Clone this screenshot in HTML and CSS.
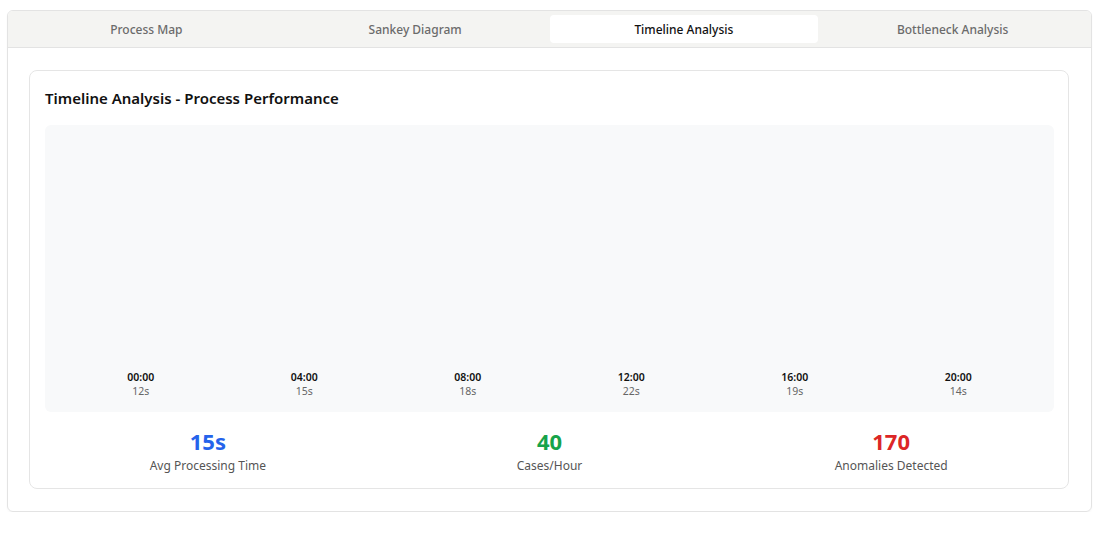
FILE: index.html
```html
<!DOCTYPE html>
<html>
<head>
<meta charset="utf-8">
<link rel="stylesheet" href="styles.css">
</head>
<body>
<div class="panel">
  <div class="tabs">
    <div class="tab">Process Map</div>
    <div class="tab">Sankey Diagram</div>
    <div class="tab active">Timeline Analysis</div>
    <div class="tab">Bottleneck Analysis</div>
  </div>
  <div class="content">
    <div class="card">
      <h3 class="title">Timeline Analysis - Process Performance</h3>
      <div class="chart">
        <div class="col"><div class="time">00:00</div><div class="val">12s</div></div>
        <div class="col"><div class="time">04:00</div><div class="val">15s</div></div>
        <div class="col"><div class="time">08:00</div><div class="val">18s</div></div>
        <div class="col"><div class="time">12:00</div><div class="val">22s</div></div>
        <div class="col"><div class="time">16:00</div><div class="val">19s</div></div>
        <div class="col"><div class="time">20:00</div><div class="val">14s</div></div>
      </div>
      <div class="stats">
        <div class="stat"><div class="num blue">15s</div><div class="lbl">Avg Processing Time</div></div>
        <div class="stat"><div class="num green">40</div><div class="lbl">Cases/Hour</div></div>
        <div class="stat"><div class="num red">170</div><div class="lbl">Anomalies Detected</div></div>
      </div>
    </div>
  </div>
</div>
</body>
</html>
```
FILE: styles.css
```css
* { box-sizing: border-box; }
body {
  margin: 0;
  padding: 10px 5px 0 7px;
  background: #fff;
  font-family: "Noto Sans", "Open Sans", sans-serif;
  color: #111;
}
.panel {
  border: 1px solid #e3e3e3;
  border-radius: 6px;
  overflow: hidden;
  box-shadow: 0 1px 2px rgba(0,0,0,0.04);
}
.tabs {
  display: grid;
  grid-template-columns: repeat(4, 1fr);
  padding: 4px;
  background: #f4f4f2;
  border-bottom: 1px solid #e3e3e3;
}
.tab {
  height: 28px;
  line-height: 30px;
  text-align: center;
  font-size: 12px;
  font-weight: 500;
  color: #6b6b6b;
  border-radius: 4px;
}
.tab.active {
  background: #fff;
  color: #111;
}
.content {
  padding: 22px 22px 22px 21px;
}
.card {
  border: 1px solid #e5e5e5;
  border-radius: 8px;
  padding: 16px 14px 14px 15px;
}
.title {
  margin: 0 0 16px;
  font-size: 15px;
  line-height: 22px;
  font-weight: 600;
  color: #111;
}
.chart {
  height: 287px;
  background: #f8f9fa;
  border-radius: 6px;
  display: grid;
  grid-template-columns: repeat(6, 1fr);
  align-items: end;
  padding: 0 14px 14px;
}
.col {
  text-align: center;
  font-size: 10.5px;
  line-height: 14px;
}
.time {
  font-weight: 600;
  color: #111;
}
.val {
  color: #666;
}
.stats {
  display: grid;
  grid-template-columns: repeat(3, 1fr);
  gap: 16px;
  margin-top: 14px;
}
.stat {
  text-align: center;
}
.num {
  font-size: 22px;
  line-height: 30px;
  font-weight: 700;
}
.blue { color: #2563eb; }
.green { color: #16a34a; }
.red { color: #dc2626; }
.lbl {
  margin-top: 1px;
  font-size: 12px;
  line-height: 17px;
  color: #555;
}
```
